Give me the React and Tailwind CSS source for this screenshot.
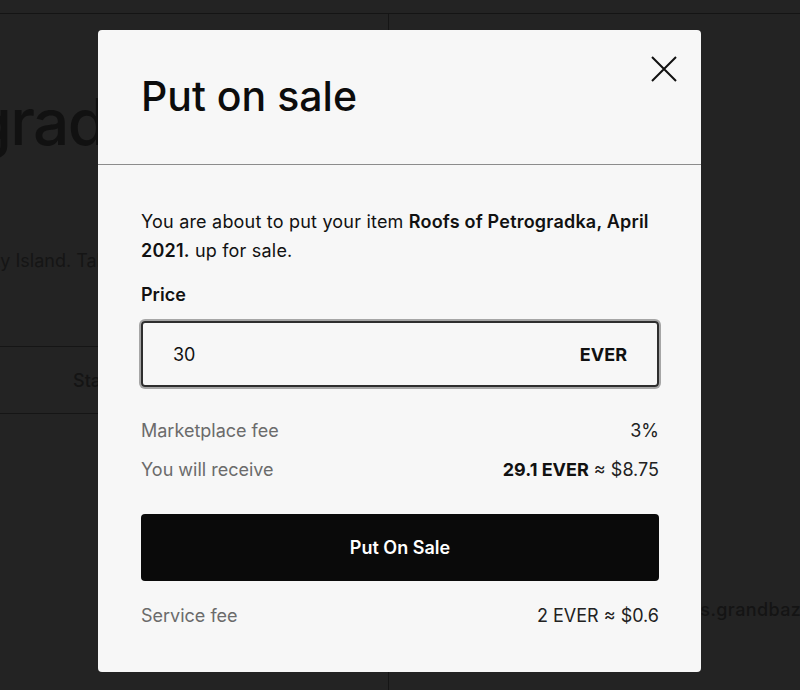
import React from "react";

export default function App() {
  return (
    <div
      className="relative w-[800px] h-[690px] overflow-hidden bg-[#232323]"
      style={{ fontFamily: "Inter, 'Noto Sans', sans-serif" }}
    >
      {/* Background page (dimmed) */}
      <div className="h-[14px] border-b border-[#141414]" />
      <div className="flex h-[676px]">
        <div className="w-[389px] border-r border-[#151515] flex flex-col overflow-hidden">
          <div className="pt-[76px] h-[200px] whitespace-nowrap text-[64px] leading-[64px] font-medium text-[#111] -ml-[440px] tracking-tight">
            Roofs of Petrogradka
          </div>
          <div className="mt-[33px] whitespace-nowrap text-[18px] text-[#151515] -ml-[89px]">
            Vasilyevsky Island. Taken in 2021
          </div>
          <div className="mt-[72px] h-[68px] border-y border-[#151515] flex items-center">
            <span className="ml-[73px] text-[18px] font-medium text-[#141414]">Status</span>
          </div>
        </div>
        <div className="flex-1 flex flex-col overflow-hidden">
          <div className="mt-[582px] whitespace-nowrap text-[18px] font-medium text-[#141414] ml-[272px] tracking-[0.4px]">
            evers.grandbazar.io
          </div>
        </div>
      </div>

      {/* Modal */}
      <div className="absolute left-[98px] top-[30px] w-[603px] h-[642px] bg-[#f7f7f7] rounded-[4px] flex flex-col text-[#111]">
        <div className="h-[135px] flex items-start justify-between pl-[43px] pr-[42px] border-b border-[#8c8c8c]">
          <h1 className="mt-[42px] text-[41px] leading-[48px] font-medium text-[#0c0c0c]">
            Put on sale
          </h1>
          <button className="mt-[25px] -mr-[19px] w-[28px] h-[28px] flex items-center justify-center">
            <svg width="28" height="28" viewBox="0 0 28 28" fill="none" stroke="#111" strokeWidth="2">
              <path d="M2 2L26 26M26 2L2 26" />
            </svg>
          </button>
        </div>
        <div className="flex flex-col pl-[43px] pr-[42px] pt-[42px]">
          <p className="text-[18px] leading-[29px] text-[#111] tracking-[0.2px]">
            You are about to put your item <span className="font-semibold">Roofs of Petrogradka, April 2021.</span> up for sale.
          </p>
          <div className="mt-[16px] text-[18px] leading-[28px] font-semibold">Price</div>
          <div className="mt-[12px] h-[66px] border-2 border-[#2e2e2e] rounded-[4px] ring-2 ring-[#a6a6a6] flex items-center justify-between px-[30px]">
            <span className="text-[18px]">30</span>
            <span className="text-[18px] font-bold">EVER</span>
          </div>
          <div className="mt-[30px] flex justify-between text-[18px] leading-[28px]">
            <span className="text-[#6b6b6b]">Marketplace fee</span>
            <span className="text-[#222]">3%</span>
          </div>
          <div className="mt-[11px] flex justify-between text-[18px] leading-[28px]">
            <span className="text-[#6b6b6b]">You will receive</span>
            <span className="text-[#222]">
              <span className="font-bold text-[#111]">29.1 EVER</span> ≈ $8.75
            </span>
          </div>
          <button className="mt-[30px] h-[67px] bg-[#0a0a0a] rounded-[4px] text-white text-[18px] font-semibold">
            Put On Sale
          </button>
          <div className="mt-[21px] flex justify-between text-[18px] leading-[28px]">
            <span className="text-[#6b6b6b]">Service fee</span>
            <span className="text-[#222]">2 EVER ≈ $0.6</span>
          </div>
        </div>
      </div>
    </div>
  );
}
